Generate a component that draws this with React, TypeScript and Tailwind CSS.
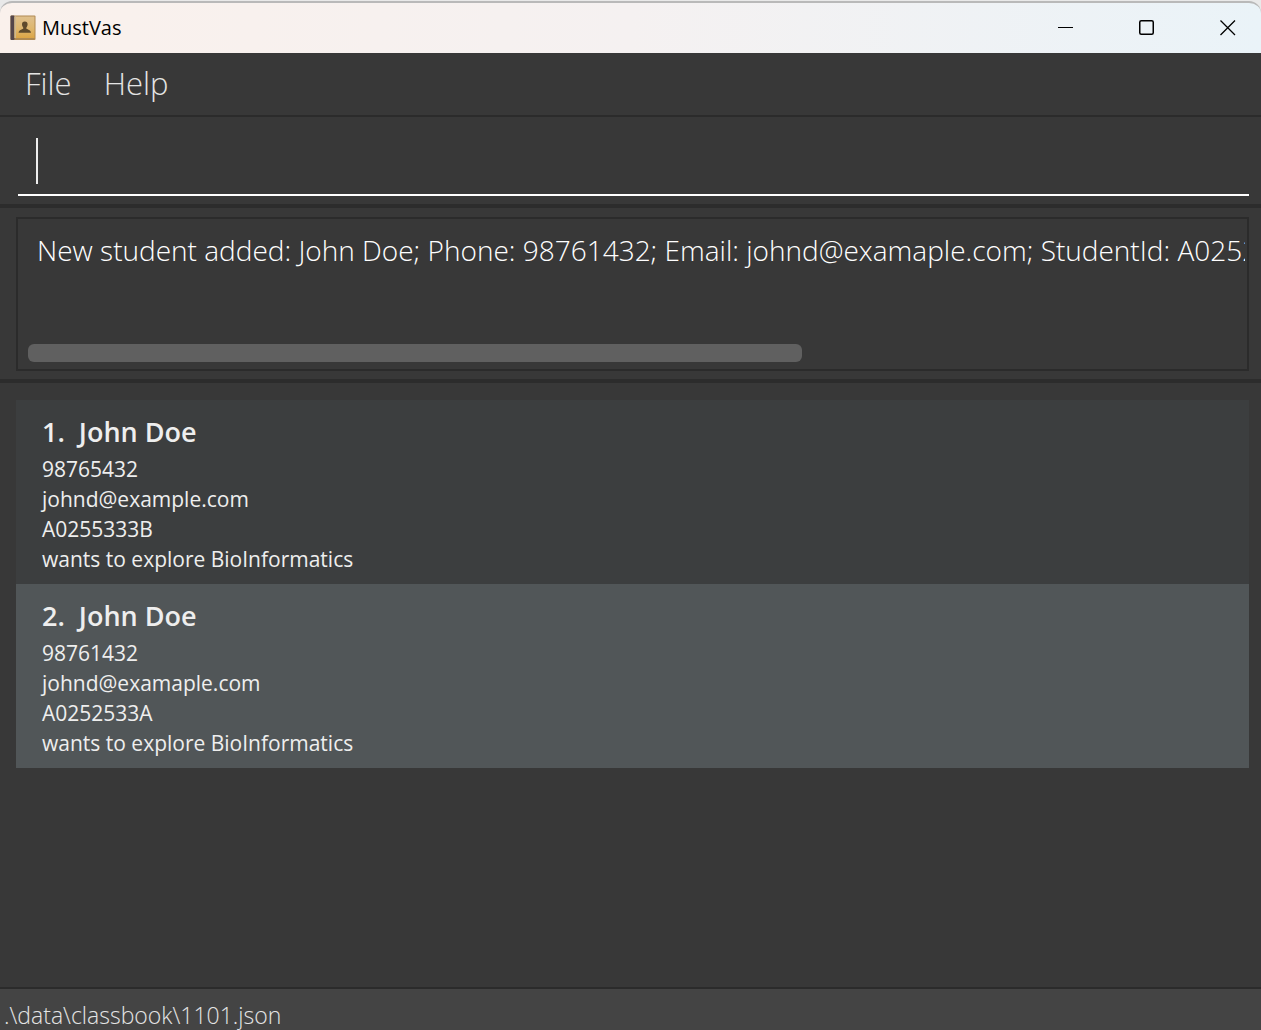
import React from "react";

type Student = {
  name: string;
  phone: string;
  email: string;
  id: string;
  note: string;
};

const students: Student[] = [
  {
    name: "John Doe",
    phone: "98765432",
    email: "johnd@example.com",
    id: "A0255333B",
    note: "wants to explore BioInformatics",
  },
  {
    name: "John Doe",
    phone: "98761432",
    email: "johnd@examaple.com",
    id: "A0252533A",
    note: "wants to explore BioInformatics",
  },
];

const result =
  "New student added: John Doe; Phone: 98761432; Email: johnd@examaple.com; StudentId: A0252533A";

function BookIcon() {
  return (
    <svg width="26" height="26" viewBox="0 0 26 26" aria-hidden="true">
      <defs>
        <linearGradient id="cover" x1="0" y1="0" x2="0" y2="1">
          <stop offset="0" stopColor="#dfc08d" />
          <stop offset="0.55" stopColor="#deb76f" />
          <stop offset="1" stopColor="#dca545" />
        </linearGradient>
      </defs>
      <rect x="0.5" y="0.5" width="25" height="24.5" rx="1" fill="#b08a52" />
      <rect x="0.5" y="0.5" width="4" height="24.5" rx="1" fill="#54464a" />
      <rect x="4.5" y="1.5" width="20" height="21.5" fill="url(#cover)" />
      <rect x="4.5" y="1.5" width="1.5" height="21.5" fill="#cdb78f" />
      <path
        d="M14.800 6.500c1.900 0 2.900 1.300 2.800 3.100-.1 1.500-.7 2.300-1.200 2.900v1.200c1.500.9 4.300 1.200 4.600 4H8.600c.3-2.800 3.100-3.100 4.600-4v-1.200c-.5-.6-1.100-1.400-1.200-2.900-.1-1.800.9-3.100 2.800-3.100z"
        fill="#5e4a2c"
      />
    </svg>
  );
}

function TitleBar() {
  const button = "flex w-[67px] items-center justify-center";
  return (
    <header className="bg-[#e9e9e9] pt-px">
      <div className="flex h-[52px] items-stretch justify-between rounded-t-xl border-t-2 border-[#b9b9b9] bg-linear-to-r from-[#faf1ec] via-[#f5f1f1] to-[#eaf3f8] text-black">
        <div className="flex items-center gap-1.5 pl-2.5">
          <BookIcon />
          <h1 className="text-xl leading-7">MustVas</h1>
        </div>
        <div className="flex gap-3.5">
          <button type="button" aria-label="Minimize" className={button}>
            <svg width="16" height="16" viewBox="0 0 16 16" stroke="#000" shapeRendering="crispEdges">
              <path d="M0 7.500h15" />
            </svg>
          </button>
          <button type="button" aria-label="Maximize" className={button}>
            <svg width="16" height="16" viewBox="0 0 16 16" fill="none" stroke="#000" strokeWidth="1.500">
              <rect x="0.750" y="0.750" width="13.500" height="13.500" rx="1.500" />
            </svg>
          </button>
          <button type="button" aria-label="Close" className={button}>
            <svg width="16" height="16" viewBox="0 0 16 16" fill="none" stroke="#000" strokeWidth="1.300">
              <path d="M.5.5l14.500 14.500M15 .5L.5 15" />
            </svg>
          </button>
        </div>
      </div>
    </header>
  );
}

function StudentCard({ index, student }: { index: number; student: Student }) {
  return (
    <li className="pt-3.5 pr-6 pb-2.5 pl-[26px] text-[21px] leading-[30px] odd:bg-[#3c3e3f] even:bg-[#515658]">
      <h2 className="flex gap-3.5 pb-1 text-[27px] leading-9 font-semibold">
        <span>{index}.</span>
        <span>{student.name}</span>
      </h2>
      <p>{student.phone}</p>
      <p>{student.email}</p>
      <p>{student.id}</p>
      <p>{student.note}</p>
    </li>
  );
}

export default function App() {
  return (
    <div className="flex min-h-screen flex-col bg-[#383838] font-['Open_Sans','Noto_Sans',sans-serif] text-[#eeeeee]">
      <TitleBar />
      <nav className="flex gap-8 border-b-2 border-[#2b2b2b] px-[25px] pt-[7px] pb-[9px] text-[31px] leading-[46px] font-light text-[#e4e4e4]">
        <button type="button">File</button>
        <button type="button">Help</button>
      </nav>
      <div className="border-b-4 border-[#2c2c2c] pt-3 pr-3 pb-2 pl-[18px]">
        <div className="relative">
          <input
            type="text"
            aria-label="Command"
            className="block h-[67px] w-full border-b-2 border-white bg-transparent px-[18px] text-[28px] font-light caret-transparent outline-none"
          />
          <span className="absolute top-[9px] left-[18px] h-[46px] w-0.5 bg-[#eeeeee]" />
        </div>
      </div>
      <section aria-label="Result" className="border-b-4 border-[#2c2c2c] pt-[9px] pr-3 pb-2 pl-4">
        <div className="flex h-[154px] flex-col justify-between border-2 border-[#2b2b2b] px-2.5 pt-2.5 pb-[7px]">
          <p className="-mr-2 overflow-x-auto pl-[9px] text-[28px] leading-[42px] font-light whitespace-nowrap text-white [scrollbar-width:none]">
            {result}
          </p>
          <div className="h-[18px] w-[64%] rounded-md bg-[#606060]" />
        </div>
      </section>
      <main className="grow pt-[17px] pr-3 pb-4 pl-4">
        <ul>
          {students.map((student, i) => (
            <StudentCard key={student.phone} index={i + 1} student={student} />
          ))}
        </ul>
      </main>
      <footer className="h-[43px] overflow-hidden border-t-2 border-[#2b2b2b] bg-[#444444] px-1 pt-2 text-[23px] leading-9 font-light text-[#e4e4e4]">
        .\data\classbook\1101.json
      </footer>
    </div>
  );
}
